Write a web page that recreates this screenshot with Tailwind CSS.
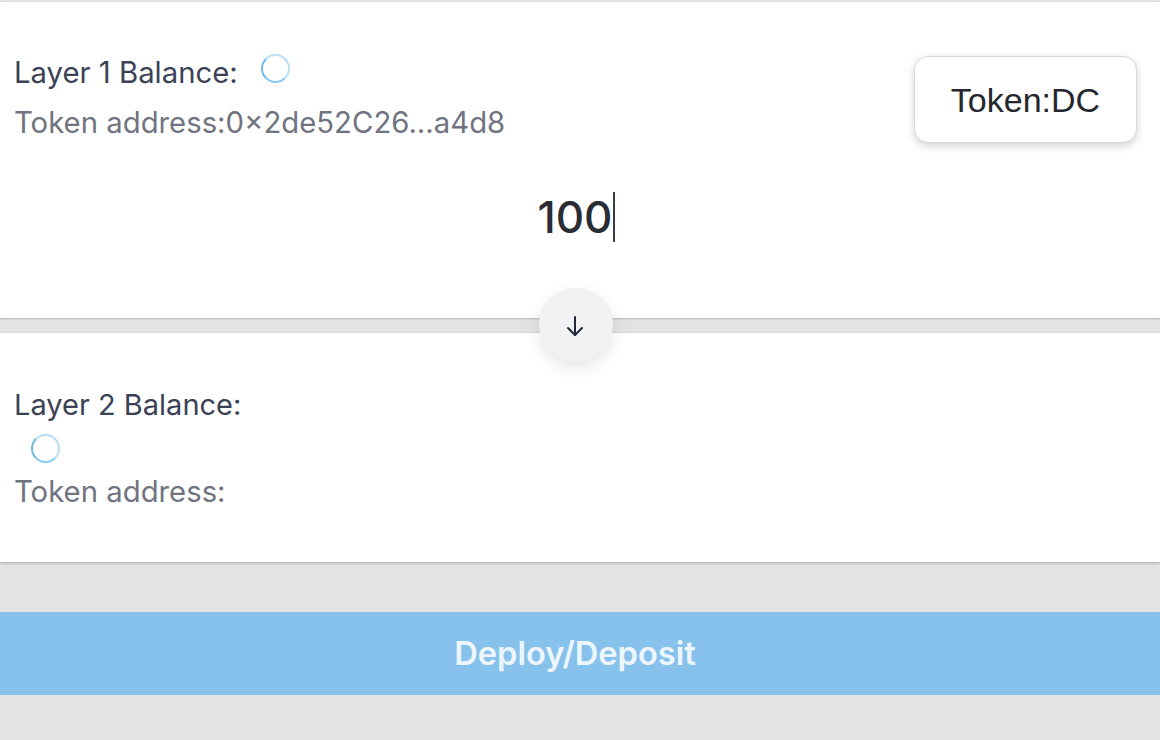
<!doctype html>
<html>
  <head>
    <meta charset="UTF-8" />
    <meta name="viewport" content="width=device-width, initial-scale=1.0" />
    <script src="https://cdn.jsdelivr.net/npm/@tailwindcss/browser@4"></script>
  </head>
  <body class="bg-[#e3e3e3] font-['Inter',sans-serif] h-[740px] overflow-hidden">
    <div class="pt-[2px]">
      <section class="relative bg-white h-[316px] shadow-[0_1px_2px_rgba(0,0,0,0.2)] pl-[14px] pt-[53px]">
        <div class="flex items-center h-[36px] text-[29.3px] text-[#3b4256]">
          <span>Layer 1 Balance:</span>
          <span class="ml-[23px] -mt-[10px] w-[29px] h-[29px] rounded-full border-2 border-[#8ccaf0] border-l-[#6fb9e8] border-t-[#b9dff6] border-r-[#b9dff6]"></span>
        </div>
        <div class="mt-[14px] h-[36px] leading-[36px] text-[29.3px] text-[#6f7480]">Token address:0×2de52C26...a4d8</div>
        <button class="absolute right-[23px] top-[54px] w-[223px] h-[87px] pt-[2px] bg-white rounded-[14px] border border-[#d8d8dc] shadow-[0_3px_8px_rgba(0,0,0,0.18)] text-[34px] text-[#25272e] font-['Liberation_Sans',sans-serif]">Token:DC</button>
        <div class="flex justify-center mt-[49px] pr-[22px] pt-[1px]">
          <div class="flex items-center h-[52px] text-[44px] font-medium text-[#2a2d36]">100<span class="w-[2px] h-[50px] bg-[#3a3d46]"></span></div>
        </div>
      </section>
      <div class="relative h-[15px] z-10">
        <button class="absolute left-[539px] top-[-30px] w-[74px] h-[74px] rounded-full bg-[#f2f2f4] shadow-[0_6px_16px_rgba(0,0,0,0.1)] flex items-center justify-center">
          <svg class="-ml-[2px] mt-[2px]" width="24" height="24" viewBox="0 0 24 24" fill="none" stroke="#22263a" stroke-width="2" stroke-linecap="round" stroke-linejoin="round"><path d="M12 3v18"/><path d="M5 14l7 7 7-7"/></svg>
        </button>
      </div>
      <section class="bg-white h-[229px] shadow-[0_1px_3px_rgba(0,0,0,0.25)] pl-[14px] pt-[54px]">
        <div class="h-[36px] leading-[36px] text-[29px] text-[#3b4256]">Layer 2 Balance:</div>
        <div class="ml-[17px] mt-[11px] w-[29px] h-[29px] rounded-full border-2 border-[#8ccaf0] border-l-[#6fb9e8] border-t-[#b9dff6] border-r-[#b9dff6]"></div>
        <div class="mt-[11px] h-[36px] leading-[36px] text-[29.3px] text-[#6f7480]">Token address:</div>
      </section>
      <button class="mt-[50px] w-full h-[83px] pr-[10px] bg-[#87c2ec] text-[32.6px] font-semibold text-white/85">Deploy/Deposit</button>
    </div>
  </body>
</html>
